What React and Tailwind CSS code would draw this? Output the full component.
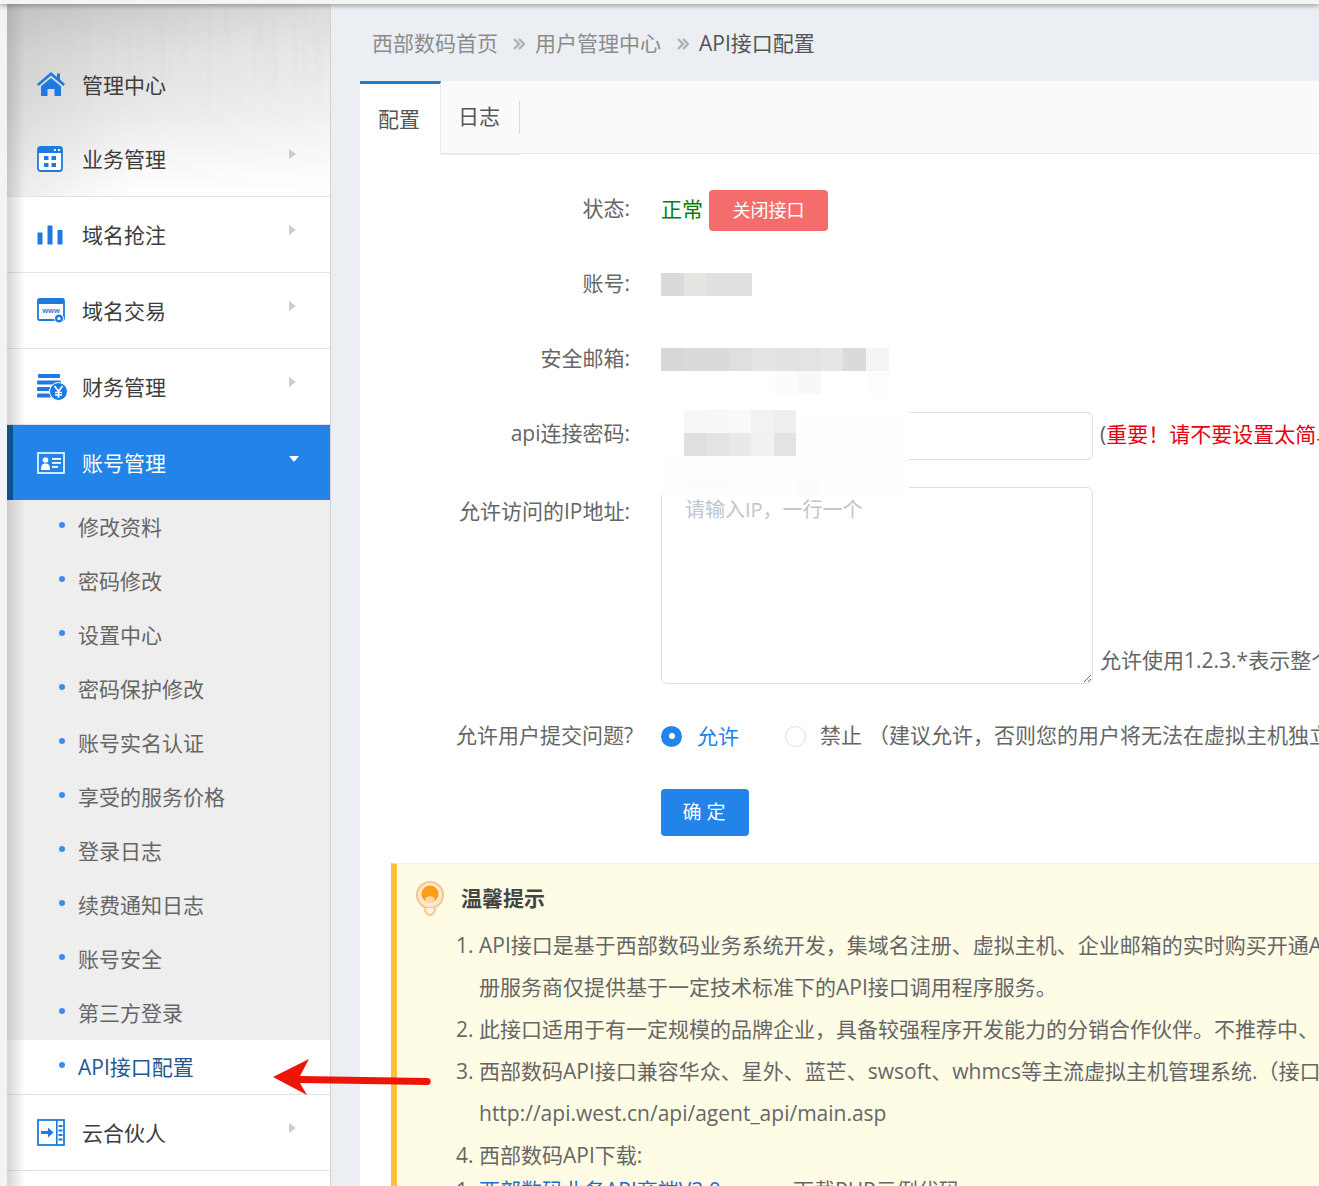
import React from "react";

const FONT = "font-['Open_Sans','Noto_Sans_CJK_SC',sans-serif]";

function HomeIcon() {
  return (
    <svg viewBox="0 0 28 26" className="w-[28px] h-[26px]">
      <path d="M14 1 L20 6 V2.5 H23 V8.6 L28 13 L26.4 15 L14 4.6 L1.6 15 L0 13 Z" fill="#1f7ae0" />
      <path d="M4 15.2 L14 7 L24 15.2 V25 H17.5 V18 H10.5 V25 H4 Z" fill="#1f7ae0" />
    </svg>
  );
}

function GridIcon() {
  return (
    <svg viewBox="0 0 26 26" className="w-[26px] h-[26px]">
      <rect x="1" y="1" width="24" height="24" rx="2.5" fill="#fff" stroke="#1f7ae0" strokeWidth="1.8" />
      <rect x="1" y="1" width="24" height="6" fill="#1f7ae0" />
      <rect x="17" y="3" width="2" height="2" fill="#fff" />
      <rect x="21" y="3" width="2" height="2" fill="#fff" />
      <rect x="7" y="10" width="4.5" height="4" fill="#1f7ae0" />
      <rect x="14.5" y="10" width="4.5" height="4" fill="#1f7ae0" />
      <rect x="7" y="17" width="4.5" height="4" fill="#1f7ae0" />
      <rect x="14.5" y="17" width="4.5" height="4" fill="#1f7ae0" />
    </svg>
  );
}

function BarsIcon() {
  return (
    <svg viewBox="0 0 26 20" className="w-[26px] h-[20px]">
      <rect x="0.5" y="7.5" width="5" height="12" rx="0.5" fill="#1f7ae0" />
      <rect x="10.5" y="0.5" width="5" height="19" rx="0.5" fill="#1f7ae0" />
      <rect x="20.5" y="5" width="5" height="14.5" rx="0.5" fill="#1f7ae0" />
    </svg>
  );
}

function WwwIcon() {
  return (
    <svg viewBox="0 0 28 26" className="w-[28px] h-[26px]">
      <rect x="1" y="1" width="26" height="21" rx="1.5" fill="#fff" stroke="#1f7ae0" strokeWidth="1.8" />
      <rect x="1" y="1" width="26" height="5" fill="#1f7ae0" />
      <text x="14" y="15" textAnchor="middle" fontSize="7.5" fontWeight="700" fill="#1f7ae0" fontFamily="Liberation Sans">www</text>
      <circle cx="22" cy="20.5" r="4.5" fill="#1f7ae0" stroke="#fff" strokeWidth="1" />
      <circle cx="22" cy="20.5" r="1.6" fill="#fff" />
    </svg>
  );
}

function CoinIcon() {
  return (
    <svg viewBox="0 0 31 28" className="w-[31px] h-[28px]">
      <rect x="1" y="1" width="22" height="4" rx="1" fill="#1f7ae0" />
      <rect x="0" y="7.5" width="24" height="4" rx="1" fill="#1f7ae0" />
      <rect x="0" y="14" width="16" height="4" rx="1" fill="#1f7ae0" />
      <rect x="0" y="20.5" width="14" height="4" rx="1" fill="#1f7ae0" />
      <circle cx="21.5" cy="18.5" r="9" fill="#1f7ae0" stroke="#fff" strokeWidth="1" />
      <path d="M17.5 13 L21.5 18.5 L25.5 13 M21.5 18.5 V25 M18 19.5 H25 M18 22 H25" stroke="#fff" strokeWidth="1.6" fill="none" />
    </svg>
  );
}

function CardIcon() {
  return (
    <svg viewBox="0 0 28 22" className="w-[28px] h-[22px]">
      <rect x="1" y="1" width="26" height="20" fill="none" stroke="#fff" strokeWidth="1.6" />
      <circle cx="8.5" cy="8" r="2.8" fill="#fff" />
      <path d="M4 18 C4 12.5 6 11.5 8.5 11.5 C11 11.5 13 12.5 13 18 Z" fill="#fff" />
      <rect x="15" y="6" width="9" height="1.8" fill="#fff" />
      <rect x="15" y="10" width="9" height="1.8" fill="#fff" />
      <rect x="15" y="14" width="6" height="1.8" fill="#fff" />
    </svg>
  );
}

function PartnerIcon() {
  return (
    <svg viewBox="0 0 28 27" className="w-[28px] h-[27px]">
      <rect x="1" y="1" width="26" height="25" fill="#fff" stroke="#1f7ae0" strokeWidth="1.8" />
      <rect x="19" y="1" width="1.6" height="25" fill="#1f7ae0" />
      <path d="M4 12 H11 V8.5 L16.5 13.5 L11 18.5 V15 H4 Z" fill="#1f7ae0" />
      <rect x="21.5" y="6" width="4" height="2" fill="#1f7ae0" />
      <rect x="21.5" y="10.5" width="4" height="2" fill="#1f7ae0" />
      <rect x="21.5" y="15" width="4" height="2" fill="#1f7ae0" />
      <rect x="21.5" y="19.5" width="4" height="2" fill="#1f7ae0" />
    </svg>
  );
}

function BulbIcon() {
  return (
    <svg viewBox="0 0 30 36" className="w-[30px] h-[36px]">
      <circle cx="15" cy="14" r="13" fill="#fde9cf" stroke="#f9c38a" strokeWidth="2" />
      <circle cx="15" cy="13" r="8.5" fill="#fb9d17" />
      <path d="M10.5 17 C12 14.5 18 14.5 19.5 17 V22 H10.5 Z" fill="#fcd9a6" />
      <path d="M10 27 C10 31 12 34 15 34 C18 34 20 31 20 27" fill="#fff4df" stroke="#f9c38a" strokeWidth="2" />
    </svg>
  );
}

function Chevrons() {
  return (
    <svg viewBox="0 0 12 12" className="w-[12px] h-[12px] shrink-0">
      <path d="M1 1 L6 6 L1 11 M6 1 L11 6 L6 11" fill="none" stroke="#b0b0b0" strokeWidth="2.4" />
    </svg>
  );
}

function Caret() {
  return <span className="ml-auto mr-[34px] mb-[10px] w-0 h-0 border-y-[5px] border-y-transparent border-l-[7px] border-l-[#c9cdd1]" />;
}

function MenuRow({ icon, label }) {
  return (
    <div className="flex items-center h-[76px] border-b border-[#dfe2e6] text-[#3d3d3d]">
      <span className="w-[75px] pl-[30px] flex items-center shrink-0">{icon}</span>
      <span className="pt-[3px]">{label}</span>
      <Caret />
    </div>
  );
}

function SubRow({ label, active }) {
  return (
    <div className={`flex items-center pl-[52px] ${active ? "h-[55px] bg-white text-[#23598f] border-b border-[#dfe2e6]" : "h-[54px] text-[#666]"}`}>
      <span className="w-[6px] h-[6px] mb-[4px] rounded-full bg-[#3b8ee8] mr-[13px]" />
      <span className="pt-[1px]">{label}</span>
    </div>
  );
}

function MosaicRow({ cells }) {
  return (
    <div className="flex">
      {cells.map((c, i) => (
        <span key={i} className={`w-[22.8px] h-[23px] ${c}`} />
      ))}
    </div>
  );
}

function FormRow({ label, children }) {
  return (
    <div className="relative flex items-center h-[75px]">
      <div className="w-[272px] shrink-0 text-right text-[#666] pr-[2px] pb-[2px]">{label}</div>
      <div className="pl-[29px] flex items-center whitespace-nowrap">{children}</div>
    </div>
  );
}

const subItems = ["修改资料", "密码修改", "设置中心", "密码保护修改", "账号实名认证", "享受的服务价格", "登录日志", "续费通知日志", "账号安全", "第三方登录"];

const tips = [
  { n: "1.", text: "API接口是基于西部数码业务系统开发，集域名注册、虚拟主机、企业邮箱的实时购买开通API接口" },
  { text: "册服务商仅提供基于一定技术标准下的API接口调用程序服务。" },
  { n: "2.", text: "此接口适用于有一定规模的品牌企业，具备较强程序开发能力的分销合作伙伴。不推荐中、小型代理商使用" },
  { n: "3.", text: "西部数码API接口兼容华众、星外、蓝芒、swsoft、whmcs等主流虚拟主机管理系统.（接口地址）" },
  { text: "http://api.west.cn/api/agent_api/main.asp" },
  { n: "4.", text: "西部数码API下载:" },
];

export default function App() {
  return (
    <div className={`relative h-[1186px] overflow-hidden bg-[#ebeef3] text-[21px] ${FONT}`}>
      <div className="relative z-20 h-1 bg-[#f4f4f4] shadow-[0_2px_4px_rgba(90,90,90,0.55)]" />

      <div className="flex h-[1182px]">
        <div className="w-[7px] shrink-0 bg-[#f3f3f3]" />

        <aside className="relative w-[324px] shrink-0 overflow-hidden bg-white border-r border-[#cfd1d4]">
          <div className="absolute inset-x-0 top-0 h-[192px] bg-[linear-gradient(180deg,#cdcdcd_0%,#dfdfdf_25%,#ececec_60%,#ffffff_98%)]">
            <div className="h-full bg-[linear-gradient(90deg,rgba(130,130,130,0.16)_0%,rgba(255,255,255,0)_40%,rgba(255,255,255,0.3)_100%)]" />
            <svg className="absolute inset-0 w-full h-full opacity-20 [mask-image:linear-gradient(180deg,#000_20%,transparent_65%)]">
              <filter id="streaks">
                <feTurbulence type="fractalNoise" baseFrequency="0.12 0.008" numOctaves="3" seed="4" />
                <feColorMatrix values="0 0 0 0 0.55  0 0 0 0 0.55  0 0 0 0 0.55  1.6 0 0 0 -0.6" />
              </filter>
              <rect width="100%" height="100%" filter="url(#streaks)" />
            </svg>
          </div>
          <div className="absolute inset-y-0 left-0 z-10 w-[18px] bg-[linear-gradient(90deg,rgba(150,150,150,0.4),rgba(255,255,255,0))]" />

          <nav className="relative">
            <div className="h-[43px]" />
            <div className="flex items-center h-[74px] text-[#3d3d3d]">
              <span className="w-[75px] pl-[30px] flex items-center shrink-0"><HomeIcon /></span>
              <span className="pt-[3px]">管理中心</span>
            </div>
            <MenuRow icon={<GridIcon />} label="业务管理" />
            <MenuRow icon={<BarsIcon />} label="域名抢注" />
            <MenuRow icon={<WwwIcon />} label="域名交易" />
            <MenuRow icon={<CoinIcon />} label="财务管理" />
            <div className="relative z-20 flex items-center h-[75px] bg-[#2283e8] border-l-[6px] border-[#0e4f8f] text-white">
              <span className="w-[69px] pl-[24px] flex items-center shrink-0"><CardIcon /></span>
              <span className="pt-[3px]">账号管理</span>
              <span className="ml-auto mr-[31px] mb-[8px] w-0 h-0 border-x-[5px] border-x-transparent border-t-[6px] border-t-white" />
            </div>
            <div className="bg-[#eeeeee]">
              {subItems.map((item) => (
                <SubRow key={item} label={item} />
              ))}
              <SubRow label="API接口配置" active />
            </div>
            <MenuRow icon={<PartnerIcon />} label="云合伙人" />
          </nav>
        </aside>

        <main className="flex-1 min-w-0 overflow-hidden">
          <div className="flex items-center h-[77px] pl-[41px] pt-[3px] text-[#8c8c8c] whitespace-nowrap">
            <span>西部数码首页</span>
            <span className="ml-[15px] mr-[10px]"><Chevrons /></span>
            <span>用户管理中心</span>
            <span className="ml-[16px] mr-[10px]"><Chevrons /></span>
            <span className="text-[#555]">API接口配置</span>
          </div>

          <section className="ml-[29px] h-[1105px] bg-white overflow-hidden">
            <div className="flex h-[73px] bg-[#fafafa] border-b border-[#e8e8e8] text-[#555]">
              <div className="flex items-center justify-center w-[81px] h-[73px] bg-white border-t-[3px] border-r border-t-[#1f7ed0] border-r-[#e8e8e8] pt-[2px] pr-[2px]">配置</div>
              <div className="flex items-center justify-center w-[79px] h-[74px] border-b-2 border-[#ececec]">
                <span className="flex items-center justify-center w-full h-[33px] pr-[2px] border-r border-[#d8d8d8]">日志</span>
              </div>
            </div>

            <div className="pt-[18px]">
              <FormRow label="状态:">
                <span className="text-[#0a7d0a]">正常</span>
                <button type="button" className="ml-[6px] mt-[2px] w-[119px] h-[41px] rounded-[4px] bg-[#f56c6c] text-white text-[18px]">关闭接口</button>
              </FormRow>
              <FormRow label="账号:">
                <MosaicRow cells={["bg-[#d9dadb]", "bg-[#e4e4e1]", "bg-[#dfe0df]", "bg-[#dfe1e0]"]} />
              </FormRow>
              <FormRow label="安全邮箱:">
                <div className="mt-[22px]">
                  <MosaicRow cells={["bg-[#d7d7d7]", "bg-[#dadada]", "bg-[#dadad8]", "bg-[#dfdfdf]", "bg-[#e3e4e6]", "bg-[#e1e2e3]", "bg-[#e2e3e3]", "bg-[#e6e6e6]", "bg-[#d9dbdb]", "bg-[#f5f5f5]"]} />
                  <MosaicRow cells={["bg-white", "bg-white", "bg-white", "bg-white", "bg-white", "bg-[#fcfcfc]", "bg-[#f8f8f8]", "bg-white", "bg-white", "bg-[#fdfdfd]"]} />
                </div>
              </FormRow>
              <FormRow label="api连接密码:">
                <input className={`w-[432px] h-[48px] mt-[3px] px-[24px] rounded-[6px] border border-[#dcdfe6] outline-none ${FONT}`} />
                <span className="ml-[7px] text-[#606266]">(<span className="text-[#e60012]">重要！请不要设置太简单的密码</span>)</span>
                <div className="absolute left-[301px] top-[13px] z-10 w-[248px] bg-[#fdfefe]">
                  <MosaicRow cells={["bg-white", "bg-[#f7f7f7]", "bg-[#f8f8f8]", "bg-[#f9f9f9]", "bg-[#f2f2f3]", "bg-[#efeff0]", "bg-[#fdfefe]", "bg-[#fdfefe]", "bg-[#fdfefe]", "bg-[#fdfefe]", "bg-[#fdfefe]"]} />
                  <MosaicRow cells={["bg-white", "bg-[#dedfdf]", "bg-[#e2e3e5]", "bg-[#e9e9ea]", "bg-[#f0f1f3]", "bg-[#e2e3e3]", "bg-[#fdfefe]", "bg-[#fdfefe]", "bg-[#fdfefe]", "bg-[#fdfefe]", "bg-[#fdfefe]"]} />
                  <MosaicRow cells={["bg-[#fdfefe]", "bg-[#fdfefe]", "bg-[#fdfefe]", "bg-[#fdfefe]", "bg-[#fdfefe]", "bg-[#fdfefe]", "bg-[#fdfefe]", "bg-[#fdfefe]", "bg-[#fdfefe]", "bg-[#fdfefe]", "bg-[#fdfefe]"]} />
                  <div className="h-[16px] overflow-hidden">
                    <MosaicRow cells={["bg-[#fdfefe]", "bg-[#fcfcfc]", "bg-[#fcfcfc]", "bg-[#fdfefe]", "bg-[#fdfefe]", "bg-[#fdfefe]", "bg-[#fbfbfb]", "bg-[#fdfefe]", "bg-[#fdfefe]", "bg-[#fdfefe]", "bg-[#fdfefe]"]} />
                  </div>
                </div>
              </FormRow>

              <div className="flex mt-[15px] h-[197px]">
                <div className="w-[272px] shrink-0 pt-[9px] text-right text-[#666] pr-[2px]">允许访问的IP地址:</div>
                <div className="pl-[29px] flex items-end whitespace-nowrap">
                  <textarea
                    placeholder="请输入IP，一行一个"
                    className={`block shrink-0 w-[432px] h-[197px] px-[23px] py-[7px] text-[20px] rounded-[6px] border border-[#dcdfe6] outline-none placeholder:text-[#c0c4cc] ${FONT}`}
                  />
                  <span className="ml-[7px] mb-[8px] text-[#666]">允许使用1.2.3.*表示整个C段</span>
                </div>
              </div>

              <div className="flex items-center mt-[24px] h-[56px] whitespace-nowrap">
                <div className="w-[273px] shrink-0 text-right text-[#666]">允许用户提交问题?</div>
                <div className="pl-[28px] flex items-center">
                  <span className="flex items-center justify-center shrink-0 w-[21px] h-[21px] rounded-full bg-[#2283e8]">
                    <span className="w-[6px] h-[6px] rounded-full bg-white" />
                  </span>
                  <span className="ml-[15px] pt-[1px] text-[#2283e8]">允许</span>
                  <span className="ml-[46px] shrink-0 w-[21px] h-[21px] rounded-full border border-[#dcdfe6] bg-white" />
                  <span className="ml-[14px] text-[#666]">禁止</span>
                  <span className="ml-[6px] text-[#666]">（建议允许，否则您的用户将无法在虚拟主机独立控制面板提交问题）</span>
                </div>
              </div>

              <div className="pl-[301px] mt-[25px]">
                <button type="button" className="w-[88px] h-[47px] pl-[3px] rounded-[4px] bg-[#2283e8] text-white text-[19px] tracking-[5px]">确定</button>
              </div>

              <div className="ml-[31px] mt-[27px] h-[330px] bg-[#fffce6] border-l-[6px] border-t border-l-[#fdbe3f] border-t-[#f0f0ea] whitespace-nowrap">
                <div className="flex items-center h-[70px] pl-[18px]">
                  <BulbIcon />
                  <span className="ml-[16px] font-bold text-[#444]">温馨提示</span>
                </div>
                <div className="text-[#666] leading-[42px] -mt-[10px]">
                  {tips.map((tip) => (
                    <div key={tip.text} className="flex">
                      <span className="w-[82px] pl-[59px] shrink-0">{tip.n}</span>
                      <span>{tip.text}</span>
                    </div>
                  ))}
                  <div className="flex -mt-[7px]">
                    <span className="w-[82px] pl-[59px] shrink-0">1.</span>
                    <a className="w-[314px] shrink-0 text-[#1c6fc9] underline">西部数码业务API商端V3.0</a>
                    <span>下载PHP示例代码</span>
                  </div>
                </div>
              </div>
            </div>
          </section>
        </main>
      </div>

      <svg viewBox="0 0 160 40" className="absolute left-[272px] top-[1058px] z-30 w-[160px] h-[40px]">
        <path d="M1 19 L37 1 L28 18 L155 20 C160 20 160 27 155 27 L28 25 L35 37 Z" fill="#ee1508" />
      </svg>
    </div>
  );
}
